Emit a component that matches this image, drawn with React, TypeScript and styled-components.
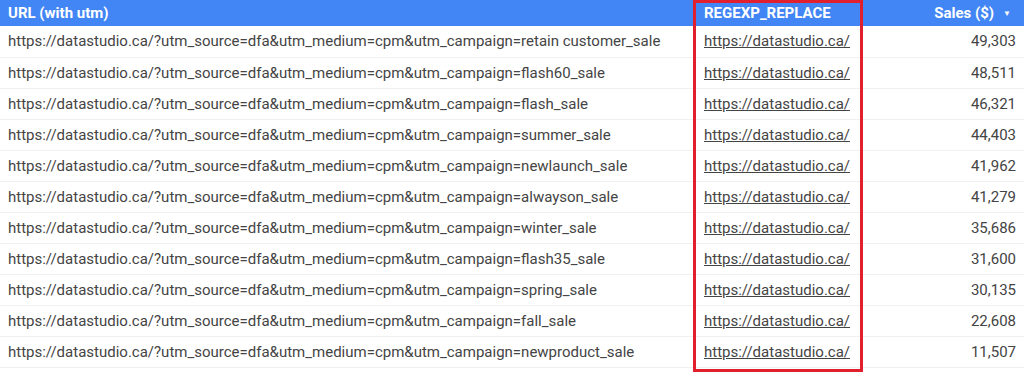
import React from 'react';
import styled, { createGlobalStyle } from 'styled-components';

const GlobalStyle = createGlobalStyle`
  html, body {
    margin: 0;
    padding: 0;
    background: #ffffff;
    font-family: Roboto, "Liberation Sans", Arial, sans-serif;
  }
`;

const Wrapper = styled.div`
  position: relative;
  width: 1024px;
  height: 376px;
  overflow: hidden;
  background: #fff;
`;

const Table = styled.table`
  width: 100%;
  border-collapse: collapse;
  table-layout: fixed;
`;

const HeaderRow = styled.tr`
  height: 26px;
  background: #4285f4;
`;

const HeaderCell = styled.th<{ $align?: 'left' | 'right' }>`
  padding: 0 ${({ $align }) => ($align === 'right' ? '13px' : '8px')} 0 8px;
  color: #ffffff;
  font-size: 15px;
  font-weight: 700;
  text-align: ${({ $align }) => $align || 'left'};
  white-space: nowrap;
`;

const Row = styled.tr`
  height: 31px;
  border-bottom: 1px solid #f0f0f0;
`;

const Cell = styled.td<{ $align?: 'left' | 'right' }>`
  padding: 0 8px;
  color: #444444;
  font-size: 15px;
  text-align: ${({ $align }) => $align || 'left'};
  white-space: nowrap;
  overflow: hidden;
`;

const Link = styled.span`
  text-decoration: underline;
  color: #444444;
`;

const SortArrow = styled.span`
  display: inline-block;
  margin-left: 9px;
  font-size: 8px;
  vertical-align: 2px;
`;

const Highlight = styled.div`
  position: absolute;
  left: 693px;
  top: 0;
  width: 164px;
  height: 366px;
  border: 3px solid #e0202e;
  pointer-events: none;
`;

const rows: [string, number][] = [
  ['retain customer_sale', 49303],
  ['flash60_sale', 48511],
  ['flash_sale', 46321],
  ['summer_sale', 44403],
  ['newlaunch_sale', 41962],
  ['alwayson_sale', 41279],
  ['winter_sale', 35686],
  ['flash35_sale', 31600],
  ['spring_sale', 30135],
  ['fall_sale', 22608],
  ['newproduct_sale', 11507],
];

export default function App() {
  return (
    <Wrapper>
      <GlobalStyle />
      <Table>
        <colgroup>
          <col style={{ width: 696 }} />
          <col style={{ width: 190 }} />
          <col />
        </colgroup>
        <thead>
          <HeaderRow>
            <HeaderCell>URL (with utm)</HeaderCell>
            <HeaderCell>REGEXP_REPLACE</HeaderCell>
            <HeaderCell $align="right">
              Sales ($)
              <SortArrow>▼</SortArrow>
            </HeaderCell>
          </HeaderRow>
        </thead>
        <tbody>
          {rows.map(([campaign, sales]) => (
            <Row key={campaign}>
              <Cell>
                https://datastudio.ca/?utm_source=dfa&amp;utm_medium=cpm&amp;utm_campaign={campaign}
              </Cell>
              <Cell>
                <Link>https://datastudio.ca/</Link>
              </Cell>
              <Cell $align="right">{sales.toLocaleString('en-US')}</Cell>
            </Row>
          ))}
        </tbody>
      </Table>
      <Highlight />
    </Wrapper>
  );
}
